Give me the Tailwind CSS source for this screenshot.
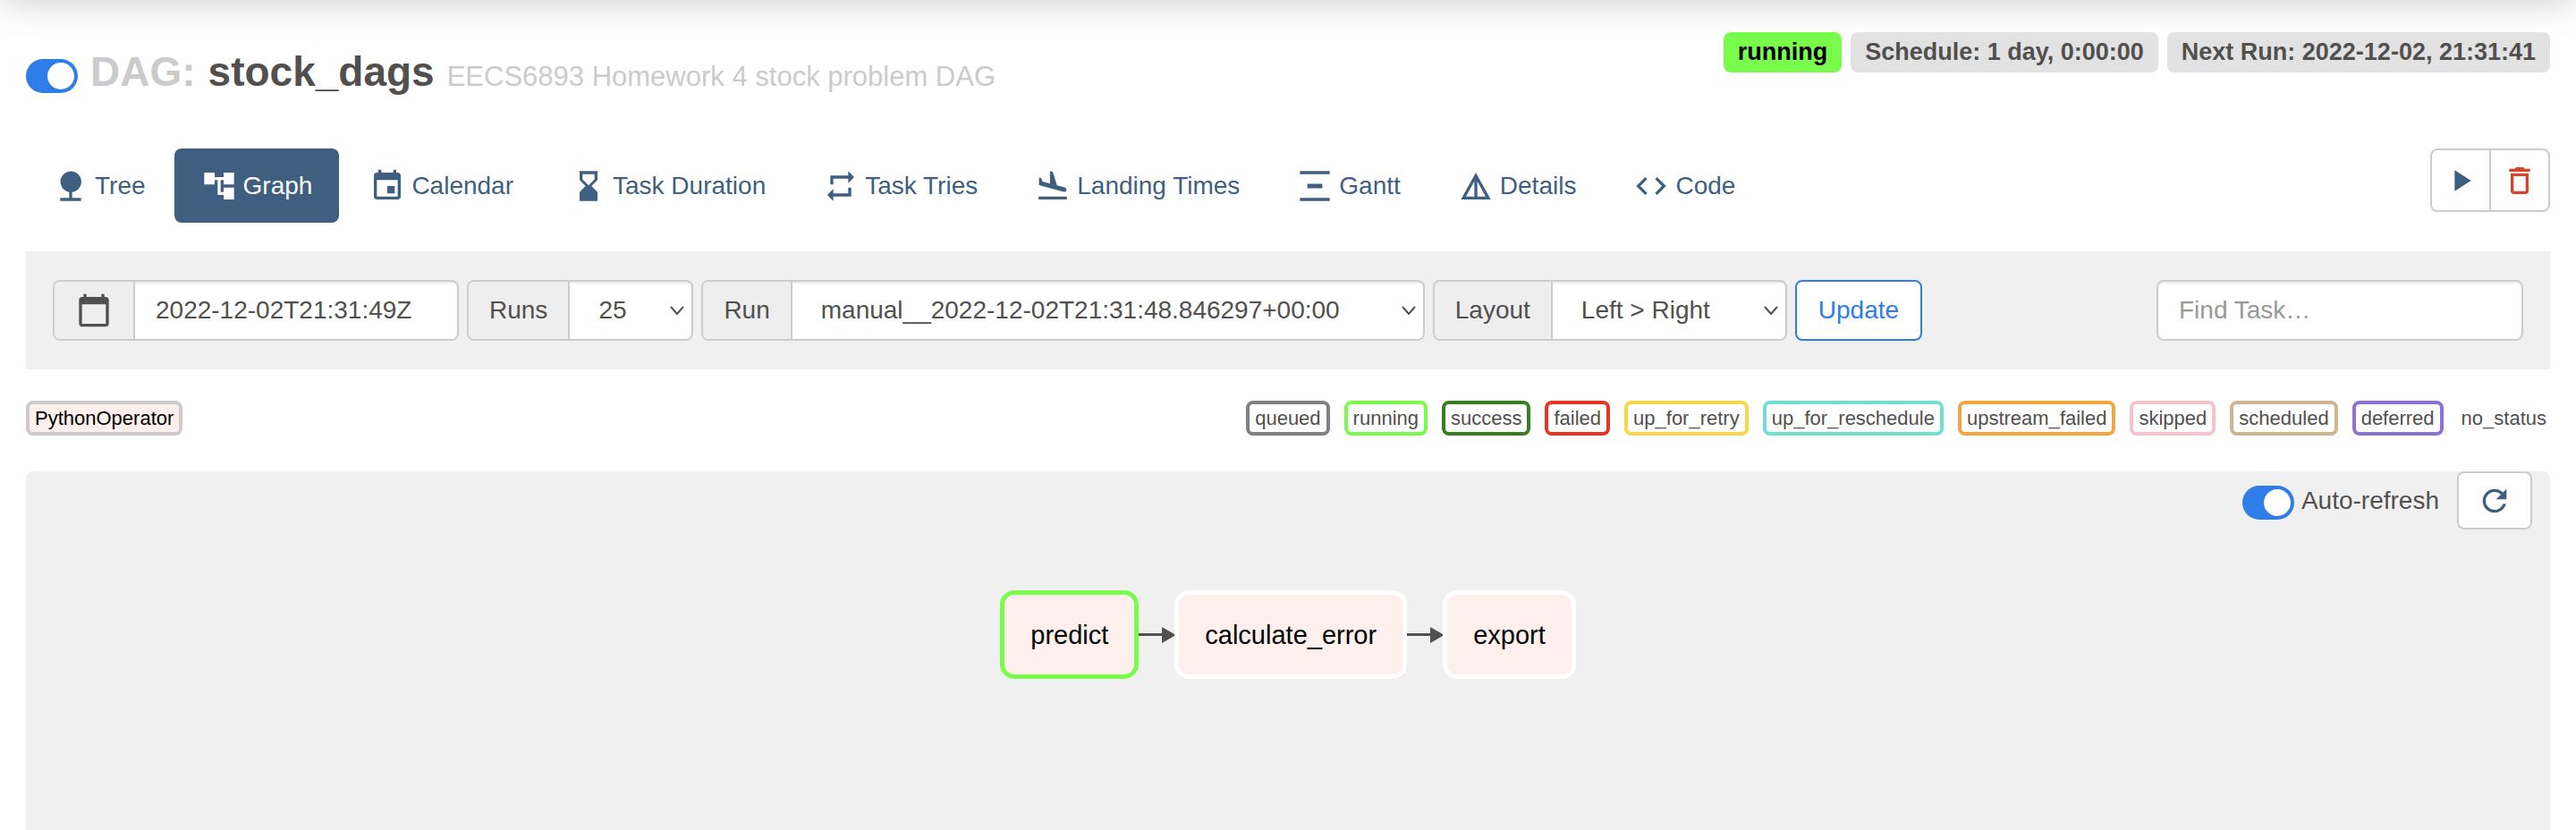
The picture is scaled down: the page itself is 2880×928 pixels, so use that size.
<!DOCTYPE html>
<html lang="en">
<head>
<meta charset="utf-8">
<title>stock_dags - Graph</title>
<script src="https://cdn.jsdelivr.net/npm/@tailwindcss/browser@4"></script>
</head>
<body class="min-h-screen flex flex-col bg-white text-[#51504f] text-[28px] leading-10 font-['Liberation_Sans',Arial,sans-serif]">
<div class="h-20 -mt-20 shrink-0 shadow-[0_0_40px_rgba(81,80,79,0.3)]"></div>

<header class="flex items-start justify-between px-[29px] pt-9">
  <div class="flex items-center pt-[14px] gap-[14px]">
    <label class="relative flex mt-1">
      <input type="checkbox" checked aria-label="Toggle DAG" class="peer appearance-none w-[58px] h-[38px] rounded-full bg-[#ccc] checked:bg-[#2e7de9]">
      <span class="absolute top-1 right-1 size-[30px] rounded-full bg-white"></span>
    </label>
    <h1 class="flex items-baseline gap-[14px] text-[46px] leading-[60px] text-[#cbcbcb]"><span class="font-bold">DAG:</span><a href="#" class="font-bold text-[#51504f]">stock_dags</a><small class="text-[31px]">EECS6893 Homework 4 stock problem DAG</small></h1>
  </div>
  <div class="flex gap-[10px] text-[27px] leading-[45px] font-bold">
    <a href="#" class="rounded-lg bg-[#79fb4b] px-4 text-black">running</a>
    <a href="#" class="rounded-lg bg-[#e2e2e2] px-4">Schedule: 1 day, 0:00:00</a>
    <span class="rounded-lg bg-[#e2e2e2] px-4">Next Run: 2022-12-02, 21:31:41</span>
  </div>
</header>

<div class="flex items-start justify-between px-[29px] pt-[50px]">
  <nav class="flex gap-1 text-[#3f5f80]">
    <a href="#" class="flex items-center gap-[7px] h-[83px] pl-[30px] pr-7 rounded-lg"><svg class="size-10 fill-current" viewBox="0 0 24 24"><path d="M13 16.12c3.47-.41 6.17-3.36 6.17-6.95 0-3.87-3.13-7-7-7s-7 3.13-7 7c0 3.47 2.52 6.34 5.83 6.89V20H5v2h14v-2h-6v-3.88z"/></svg>Tree</a>
    <a href="#" class="flex items-center gap-[7px] h-[83px] px-[30px] rounded-lg bg-[#3f5f80] text-white"><svg class="size-10 fill-current" viewBox="0 0 24 24"><path d="M22 11V3h-7v3H9V3H2v8h7V8h2v10h4v3h7v-8h-7v3h-2V8h2v3z"/></svg>Graph</a>
    <a href="#" class="flex items-center gap-[7px] h-[83px] px-[30px] rounded-lg"><svg class="size-10 fill-current" viewBox="0 0 24 24"><path d="M17 12h-5v5h5v-5zM16 1v2H8V1H6v2H5c-1.11 0-1.99.9-1.99 2L3 19c0 1.1.89 2 2 2h14c1.1 0 2-.9 2-2V5c0-1.1-.9-2-2-2h-1V1h-2zm3 18H5V8h14v11z"/></svg>Calendar</a>
    <a href="#" class="flex items-center gap-[7px] h-[83px] px-[30px] rounded-lg"><svg class="size-10 fill-current" viewBox="0 0 24 24"><path d="M18 22l-.01-6L14 12l3.99-4.01L18 2H6v6l4 4-4 3.99V22h12zM8 7.500V4h8v3.500l-4 4-4-4z"/></svg>Task Duration</a>
    <a href="#" class="flex items-center gap-[7px] h-[83px] px-[30px] rounded-lg"><svg class="size-10 fill-current" viewBox="0 0 24 24"><path d="M7 7h10v3l4-4-4-4v3H5v6h2V7zm10 10H7v-3l-4 4 4 4v-3h12v-6h-2v4z"/></svg>Task Tries</a>
    <a href="#" class="flex items-center gap-[7px] h-[83px] px-[30px] rounded-lg"><svg class="size-10 fill-current" viewBox="0 0 24 24"><path d="M2.500 19h19v2h-19v-2zm16.840-3.150c.8.210 1.620-.260 1.840-1.060.210-.8-.260-1.620-1.060-1.840l-5.310-1.420-2.760-9.020L10.120 2v8.280L5.150 8.950l-.930-2.320-1.450-.390v5.170l16.570 4.440z"/></svg>Landing Times</a>
    <a href="#" class="flex items-center gap-[7px] h-[83px] px-[30px] rounded-lg"><svg class="size-10 fill-current" viewBox="0 0 24 24"><path d="M22 2v2H2V2h20zM7 10.500v3h10v-3H7zM2 20v2h20v-2H2z"/></svg>Gantt</a>
    <a href="#" class="flex items-center gap-[7px] h-[83px] px-[30px] rounded-lg"><svg class="size-10 fill-current" viewBox="0 0 24 24"><path d="M12 3L2 21h20L12 3zm1 5.920L18.600 19H13V8.920zm-2 0V19H5.400L11 8.920z"/></svg>Details</a>
    <a href="#" class="flex items-center gap-[7px] h-[83px] px-[30px] rounded-lg"><svg class="size-10 fill-current" viewBox="0 0 24 24"><path d="M9.400 16.600L4.800 12l4.600-4.600L8 6l-6 6 6 6 1.400-1.400zm5.200 0l4.600-4.600-4.600-4.600L16 6l6 6-6 6-1.400-1.400z"/></svg>Code</a>
  </nav>
  <div class="flex h-[71px] border-2 border-[#ccc] rounded-lg divide-x-2 divide-[#ccc] text-[#3f5f80]">
    <button aria-label="Trigger DAG" class="w-[66px] grid place-items-center"><svg class="size-10 fill-current" viewBox="0 0 24 24"><path d="M8 5v14l11-7z"/></svg></button>
    <button aria-label="Delete DAG" class="w-16 grid place-items-center text-[#d5452b]"><svg class="size-10 fill-current" viewBox="0 0 24 24"><path d="M6 19c0 1.100.9 2 2 2h8c1.100 0 2-.9 2-2V7H6v12zM8 9h8v10H8V9zm7.500-5l-1-1h-5l-1 1H5v2h14V4z"/></svg></button>
  </div>
</div>

<form class="mx-[29px] mt-8 flex items-center justify-between bg-[#f0f0f0] px-[30px] py-8">
  <div class="flex gap-[9px]">
    <div class="flex h-[68px] rounded-lg border-2 border-[#ccc] bg-white overflow-hidden">
      <label for="date" aria-label="Base date" class="w-[90px] grid place-items-center bg-[#eee] border-r-2 border-[#ccc]"><svg class="size-10 fill-current" viewBox="0 0 24 24"><path d="M20 3h-1V1h-2v2H7V1H5v2H4c-1.100 0-2 .9-2 2v16c0 1.100.9 2 2 2h16c1.100 0 2-.9 2-2V5c0-1.100-.9-2-2-2zm0 18H4V8h16v13z"/></svg></label>
      <input id="date" value="2022-12-02T21:31:49Z" class="w-[360px] px-[23px] shadow-[inset_0_2px_2px_rgba(0,0,0,0.075)]">
    </div>
    <div class="flex h-[68px] rounded-lg border-2 border-[#ccc] bg-white overflow-hidden">
      <label for="runs" class="flex items-center px-[23px] bg-[#eee] border-r-2 border-[#ccc]">Runs</label>
      <div class="relative flex items-center">
        <select id="runs" class="appearance-none w-[136px] h-full px-8 shadow-[inset_0_2px_2px_rgba(0,0,0,0.075)]"><option>25</option></select>
        <svg class="absolute right-[6px] w-5 h-3 pointer-events-none fill-none stroke-current stroke-2" viewBox="0 0 20 12"><path d="M3 2l7 8 7-8"/></svg>
      </div>
    </div>
    <div class="flex h-[68px] rounded-lg border-2 border-[#ccc] bg-white overflow-hidden">
      <label for="run" class="flex items-center px-[23px] bg-[#eee] border-r-2 border-[#ccc]">Run</label>
      <div class="relative flex items-center">
        <select id="run" class="appearance-none w-[705px] h-full px-8 shadow-[inset_0_2px_2px_rgba(0,0,0,0.075)]"><option>manual__2022-12-02T21:31:48.846297+00:00</option></select>
        <svg class="absolute right-[6px] w-5 h-3 pointer-events-none fill-none stroke-current stroke-2" viewBox="0 0 20 12"><path d="M3 2l7 8 7-8"/></svg>
      </div>
    </div>
    <div class="flex h-[68px] rounded-lg border-2 border-[#ccc] bg-white overflow-hidden">
      <label for="layout" class="flex items-center px-[23px] bg-[#eee] border-r-2 border-[#ccc]">Layout</label>
      <div class="relative flex items-center">
        <select id="layout" class="appearance-none w-[260px] h-full px-8 shadow-[inset_0_2px_2px_rgba(0,0,0,0.075)]"><option>Left &gt; Right</option></select>
        <svg class="absolute right-[6px] w-5 h-3 pointer-events-none fill-none stroke-current stroke-2" viewBox="0 0 20 12"><path d="M3 2l7 8 7-8"/></svg>
      </div>
    </div>
    <button type="button" class="h-[68px] px-6 rounded-lg border-2 border-[#2e7de9] bg-white text-[#2e7de9]">Update</button>
  </div>
  <input aria-label="Find Task" placeholder="Find Task…" class="w-[410px] h-[68px] px-[23px] rounded-lg border-2 border-[#ccc] bg-white placeholder:text-[#999] shadow-[inset_0_2px_2px_rgba(0,0,0,0.075)]">
</form>

<div class="flex justify-between px-[29px] pt-[35px] text-[22px] leading-[31px]">
  <span class="px-[6px] border-4 rounded-lg border-[#ccc] bg-[#fdefec] text-black">PythonOperator</span>
  <div class="flex gap-4">
    <span class="px-[6px] border-4 rounded-lg border-[#808080]">queued</span>
    <span class="px-[6px] border-4 rounded-lg border-[#79fb4b]">running</span>
    <span class="px-[6px] border-4 rounded-lg border-[#377e22]">success</span>
    <span class="px-[6px] border-4 rounded-lg border-[#ea3323]">failed</span>
    <span class="px-[6px] border-4 rounded-lg border-[#f9d648]">up_for_retry</span>
    <span class="px-[6px] border-4 rounded-lg border-[#74dfd0]">up_for_reschedule</span>
    <span class="px-[6px] border-4 rounded-lg border-[#f2a63b]">upstream_failed</span>
    <span class="px-[6px] border-4 rounded-lg border-[#f6c2cc]">skipped</span>
    <span class="px-[6px] border-4 rounded-lg border-[#ceb48f]">scheduled</span>
    <span class="px-[6px] border-4 rounded-lg border-[#8d72d6]">deferred</span>
    <span class="px-1 py-1">no_status</span>
  </div>
</div>

<main class="mx-[29px] mt-10 flex-1 rounded-t-lg bg-[#f0f0f0]">
  <div class="flex justify-end pr-5">
    <label class="flex items-center gap-2 mr-5">
      <span class="relative flex mt-1"><input type="checkbox" checked class="appearance-none w-[58px] h-[38px] rounded-full bg-[#ccc] checked:bg-[#2e7de9]"><span class="absolute top-1 right-1 size-[30px] rounded-full bg-white"></span></span>
      Auto-refresh
    </label>
    <button aria-label="Refresh" class="w-[84px] h-[65px] grid place-items-center rounded-lg border-2 border-[#ccc] bg-white text-[#3f5f80]"><svg class="size-10 fill-current" viewBox="0 0 24 24"><path d="M17.650 6.350C16.200 4.900 14.210 4 12 4c-4.420 0-7.990 3.580-7.990 8s3.570 8 7.990 8c3.730 0 6.840-2.550 7.730-6h-2.080c-.820 2.330-3.040 4-5.650 4-3.310 0-6-2.690-6-6s2.690-6 6-6c1.660 0 3.140.690 4.220 1.780L13 11h7V4l-2.350 2.350z"/></svg></button>
  </div>
  <div class="flex justify-center items-center pt-[68px] text-[29px] text-black">
    <div class="h-[99px] px-[29px] flex items-center rounded-2xl border-[5px] border-[#79fb4b] bg-[#fdefec]">predict</div>
    <svg class="w-10 h-6 fill-[#51504f]" viewBox="0 0 40 24"><path d="M0 10h26V3l14 8v2l-14 8V13H0z"/></svg>
    <div class="h-[99px] px-[29px] flex items-center rounded-2xl border-[5px] border-white bg-[#fdefec]">calculate_error</div>
    <svg class="w-10 h-6 fill-[#51504f]" viewBox="0 0 40 24"><path d="M0 10h26V3l14 8v2l-14 8V13H0z"/></svg>
    <div class="h-[99px] px-[29px] flex items-center rounded-2xl border-[5px] border-white bg-[#fdefec]">export</div>
  </div>
</main>
</body>
</html>
